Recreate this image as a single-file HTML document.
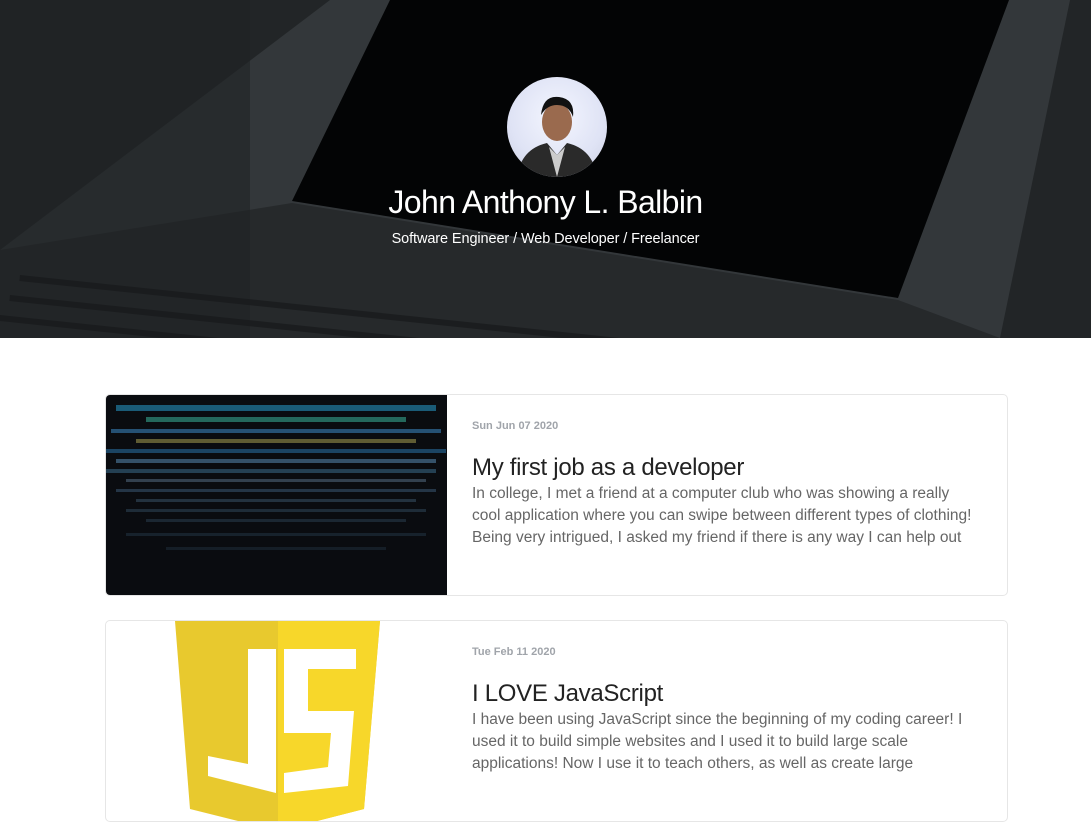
<!DOCTYPE html>
<html><head><meta charset="utf-8"><style>
*{margin:0;padding:0;box-sizing:border-box}
body{width:1091px;height:831px;overflow:hidden;background:#fff;font-family:"Liberation Sans",sans-serif}
.hero{position:relative;height:338px;background:#222527;overflow:hidden}
.hero svg{position:absolute;left:0;top:0}
.av{position:absolute;left:507px;top:77px;width:100px;height:100px;border-radius:50%;background:radial-gradient(circle at 50% 40%,#f4f6ff 0,#dfe3f5 60%,#c9cde0 100%);overflow:hidden}
.name{position:absolute;top:184px;width:100%;text-align:center;color:#fff;font-size:32px;letter-spacing:-0.6px}
.sub{position:absolute;top:231px;width:100%;text-align:center;color:#fff;font-size:14.5px;letter-spacing:-0.1px}
.card{position:absolute;left:105px;width:903px;height:202px;border:1px solid #e6e6e6;border-radius:5px;overflow:hidden}
.img{position:absolute;left:0;top:0;width:341px;height:100%}
.txt{position:absolute;left:366px;width:500px}
.date{font-size:11px;color:#a0a4aa;font-weight:bold;height:15px}
.t{font-size:24px;color:#222;margin-top:18px;line-height:30px;letter-spacing:-0.3px}
.b{font-size:15.5px;color:#666;line-height:22px}
</style></head><body>
<div class="hero">
<svg width="1091" height="338">
<polygon points="330,0 1070,0 1000,338 0,338 0,250" fill="#33373a"/>
<polygon points="390,0 1009,0 898,298 292,201" fill="#030405"/>
<polygon points="0,250 292,203 898,300 1000,338 0,338" fill="#26292b"/>
<rect x="0" y="0" width="250" height="338" fill="#202325" opacity="0.6"/>
<g fill="#17191b" opacity="0.7">
<rect x="20" y="275" width="700" height="6" transform="rotate(6 20 275)"/>
<rect x="10" y="295" width="760" height="6" transform="rotate(6 10 295)"/>
<rect x="0" y="315" width="800" height="6" transform="rotate(6 0 315)"/>
</g>
</svg>
<div class="av"><svg width="100" height="100"><ellipse cx="50" cy="45" rx="15" ry="19" fill="#9a6a4e"/><path d="M34 38 Q36 18 52 20 Q68 22 66 40 Q62 28 50 28 Q40 28 34 38Z" fill="#111"/><path d="M10 100 Q14 72 40 66 L50 78 L60 66 Q86 72 90 100Z" fill="#2a2a2a"/><path d="M42 70 L50 100 L58 70 L50 78Z" fill="#ccc"/></svg></div>
<div class="name">John Anthony L. Balbin</div>
<div class="sub">Software Engineer / Web Developer / Freelancer</div>
</div>
<div class="card" style="top:394px">
<svg class="img" width="341" height="202"><rect width="341" height="202" fill="#0a0c10"/>
<g opacity="0.85">
<rect x="10" y="10" width="320" height="6" fill="#1e6a8a"/><rect x="40" y="22" width="260" height="5" fill="#2a7a6a"/>
<rect x="5" y="34" width="330" height="4" fill="#2b5f86"/><rect x="30" y="44" width="280" height="4" fill="#6f6b3a"/>
<rect x="0" y="54" width="340" height="4" fill="#1f4f72"/><rect x="10" y="64" width="320" height="4" fill="#3c5e7a"/>
<rect x="0" y="74" width="330" height="4" fill="#2a4a60"/><rect x="20" y="84" width="300" height="3" fill="#3a4a5a"/>
<rect x="10" y="94" width="320" height="3" fill="#2a3e50"/><rect x="30" y="104" width="280" height="3" fill="#283a48"/>
<rect x="20" y="114" width="300" height="3" fill="#223240"/><rect x="40" y="124" width="260" height="3" fill="#1e2c38"/>
<rect x="20" y="138" width="300" height="3" fill="#1a2632"/><rect x="60" y="152" width="220" height="3" fill="#18222c"/>
</g></svg>
<div class="txt" style="top:25px"><div class="date">Sun Jun 07 2020</div><div class="t">My first job as a developer</div><div class="b">In college, I met a friend at a computer club who was showing a really cool application where you can swipe between different types of clothing! Being very intrigued, I asked my friend if there is any way I can help out</div></div>
</div>
<div class="card" style="top:620px">
<svg class="img" width="341" height="202"><polygon points="69,0 274,0 258,188 172,210 84,188" fill="#e8c92e"/><polygon points="172,0 274,0 258,188 172,210" fill="#f7d72a"/>
<polygon points="142,28 170,28 170,172 102,155 102,135 142,143" fill="#fff"/><polygon points="178,28 250,28 250,48 202,48 202,90 248,90 242,165 178,172 178,152 222,146 225,112 178,112" fill="#fff"/></svg>
<div class="txt" style="top:25px"><div class="date">Tue Feb 11 2020</div><div class="t">I LOVE JavaScript</div><div class="b">I have been using JavaScript since the beginning of my coding career! I used it to build simple websites and I used it to build large scale applications! Now I use it to teach others, as well as create large</div></div>
</div>
</body></html>
